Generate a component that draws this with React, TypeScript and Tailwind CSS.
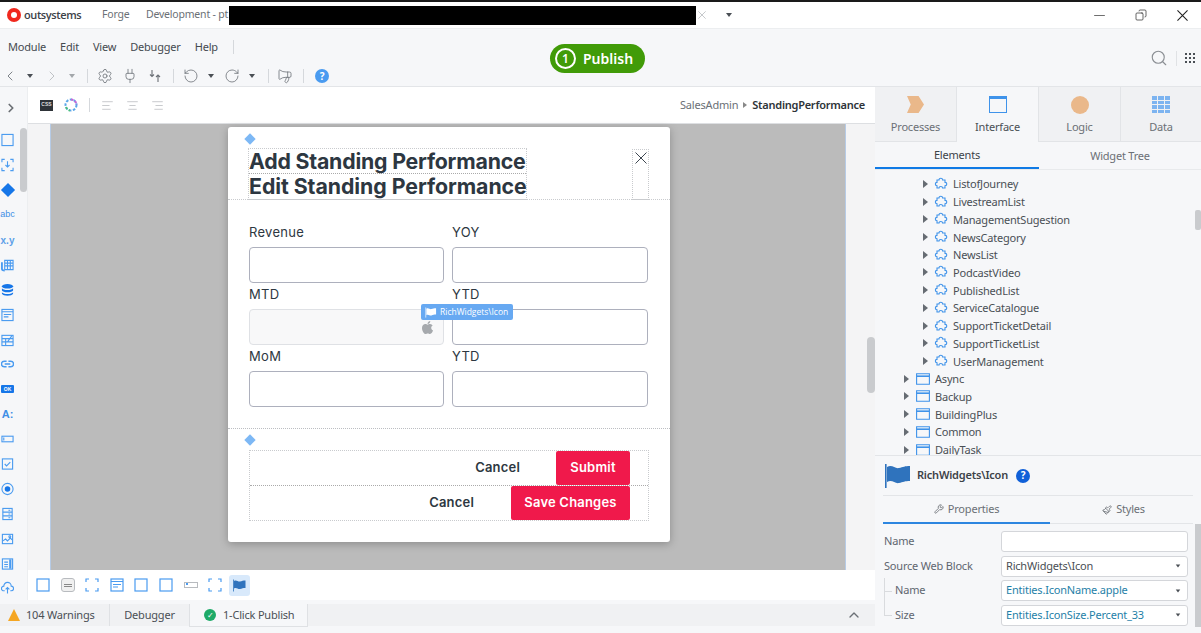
import type { ReactNode } from 'react'
import {
  AlignCenter,
  AlignLeft,
  AlignRight,
  ChevronLeft,
  ChevronRight,
  ChevronUp,
  Copy,
  Megaphone,
  Minus,
  Plug,
  RotateCcw,
  RotateCw,
  Search,
  Settings,
  Wrench,
  Paintbrush,
} from 'lucide-react'
import { FaApple } from 'react-icons/fa'

const BLUE = '#4a9bf0'

function Caret({ className = '' }: { className?: string }) {
  return <span className={`h-0 w-0 border-x-[3.5px] border-t-[4px] border-x-transparent border-t-[#4a4f55] ${className}`} />
}

function TreeArrow() {
  return <span className="h-0 w-0 border-y-[4px] border-l-[5px] border-y-transparent border-l-[#666c73]" />
}

function Cross({ className, width = 1 }: { className: string; width?: number }) {
  return (
    <svg viewBox="0 0 12 12" className={className} fill="none" stroke="currentColor" strokeWidth={width}>
      <path d="M.5.5l11 11M11.500.5l-11 11" />
    </svg>
  )
}

function Outline({ children }: { children: ReactNode }) {
  return (
    <svg viewBox="0 0 14 14" className="h-[14px] w-[14px]" fill="none" stroke={BLUE} strokeWidth="1.2">
      {children}
    </svg>
  )
}

function FlagIcon({ className, color = '#2f73bd' }: { className: string; color?: string }) {
  return (
    <svg viewBox="0 0 28 26" className={className}>
      <rect x="1" y="1" width="1.6" height="24" fill={color} />
      <path d="M3 4c5-3 8 2 12 1s6-2 11-2v15c-5 0-7 1-11 2s-7-4-12-1z" fill={color} />
    </svg>
  )
}

function Puzzle() {
  return (
    <svg viewBox="0 0 14 14" className="h-[14px] w-[14px] shrink-0" fill="none" stroke="#3f93ea" strokeWidth="1.1">
      <path d="M3 3h2c0-2.400 3.600-2.400 3.600 0H11v2.400c2.400 0 2.400 3.400 0 3.400V11H8.600c0-2-3.600-2-3.600 0H3V8.800C.8 8.800.8 5.400 3 5.400z" />
    </svg>
  )
}

function FolderIcon() {
  return (
    <svg viewBox="0 0 14 12" className="h-[12px] w-[14px] shrink-0" fill="none" stroke="#3f93ea" strokeWidth="1.1">
      <path d="M.6.8h12.800v10.400H.6z" />
      <path d="M.6 3.200h12.800" strokeWidth="1.6" />
    </svg>
  )
}

const railIcons: ReactNode[] = [
  <Outline key="container"><rect x="1" y="1" width="12" height="12" /></Outline>,
  <Outline key="placeholder"><path d="M1 4V1h3M10 1h3v3M13 10v3h-3M4 13H1v-3M7 3v6M4.800 7 7 9.200 9.200 7" /></Outline>,
  <span key="if" className="h-[10px] w-[10px] rotate-45 bg-[#1676e8]" />,
  <span key="abc" className="font-['Liberation_Sans',sans-serif] text-[9px] tracking-normal text-[#3f8fe6]">abc</span>,
  <span key="xy" className="font-['Liberation_Sans',sans-serif] text-[10px] font-bold tracking-normal text-[#5d9fe8]">x.y</span>,
  <Outline key="table"><path d="M4 2h9v10H4zM4 5h9M4 8h9M7 2v10M10 2v10" /><path d="M1 4v7c0 1 1 2 3 2" strokeWidth="2" /></Outline>,
  <svg key="db" viewBox="0 0 14 14" className="h-[14px] w-[14px]" fill="#1676e8"><ellipse cx="7" cy="3" rx="6" ry="2.500" /><path d="M1 5c1 2.500 11 2.500 12 0v2.500c-1 2.500-11 2.500-12 0zM1 9.500c1 2.500 11 2.500 12 0V11c-1 2.800-11 2.800-12 0z" /></svg>,
  <Outline key="form"><rect x="1" y="1" width="12" height="12" /><path d="M1 3.500h12M3 6.500h8M3 9h5" /></Outline>,
  <Outline key="edit"><rect x="1" y="2" width="12" height="11" /><path d="M1 5.500h12M1 9h12M5 5.500V13M7 9l5-7" /></Outline>,
  <Outline key="link"><path d="M6 4H3.500a3 3 0 0 0 0 6H6M8 4h2.500a3 3 0 0 1 0 6H8M4 7h6" strokeWidth="1.500" /></Outline>,
  <span key="ok" className="flex h-[8px] w-[13px] items-center justify-center rounded-[1px] bg-[#1676e8] font-['Liberation_Sans',sans-serif] text-[5px] font-bold tracking-normal text-white">OK</span>,
  <span key="label" className="font-['Liberation_Sans',sans-serif] text-[11px] font-bold tracking-normal text-[#3f8fe6]">A:</span>,
  <Outline key="input"><rect x="1" y="4" width="12" height="6" /><path d="M3 5.500v3" /></Outline>,
  <Outline key="check"><rect x="1.500" y="1.500" width="11" height="11" /><path d="m4 7 2 2 4-4" /></Outline>,
  <svg key="radio" viewBox="0 0 14 14" className="h-[14px] w-[14px]" fill="none" stroke={BLUE} strokeWidth="1.200"><circle cx="7" cy="7" r="6" /><circle cx="7" cy="7" r="3" fill="#1676e8" stroke="none" /></svg>,
  <Outline key="list"><rect x="2" y="1" width="10" height="12" /><path d="M2 5h10M2 9h10" /><path d="M8 3h2M8 7h2M8 11h2" /></Outline>,
  <Outline key="image"><rect x="1.500" y="2" width="11" height="10" /><path d="m2 9 3-2 2 2 3-3 2 2" /><circle cx="9.500" cy="4.500" r="1" /></Outline>,
  <Outline key="table2"><rect x="1.500" y="1.500" width="11" height="11" /><path d="M3.500 5h4M3.500 7.500h4M3.500 10h4" /><path d="M10 2v10" strokeWidth="2.400" /></Outline>,
  <svg key="upload" viewBox="0 0 14 14" className="h-[14px] w-[14px]" fill="none" stroke={BLUE} strokeWidth="1.200"><path d="M4 10H3a2.500 2.500 0 0 1 0-5 4 4 0 0 1 8 0 2.500 2.500 0 0 1 0 5h-1M7 13V6.500M5 8.500l2-2 2 2" /></svg>,
]

const treeChildren = [
  'ListofJourney',
  'LivestreamList',
  'ManagementSugestion',
  'NewsCategory',
  'NewsList',
  'PodcastVideo',
  'PublishedList',
  'ServiceCatalogue',
  'SupportTicketDetail',
  'SupportTicketList',
  'UserManagement',
]
const treeFolders = ['Async', 'Backup', 'BuildingPlus', 'Common', 'DailyTask']

function Field({ label, disabled, children }: { label: string; disabled?: boolean; children?: ReactNode }) {
  return (
    <div className="w-[195px] last:w-[196px]">
      <div className="h-[26px] text-[13px] leading-[22px] tracking-[0.3px] text-[#2d3741]">{label}</div>
      <div
        className={`relative h-[36px] rounded-[4px] border ${disabled ? 'border-[#dfe1e5] bg-[#f8f8f9]' : 'border-[#adb0bd] bg-white'}`}
      >
        {children}
      </div>
    </div>
  )
}

function PropRow({ label, value, teal, nested, last, select = true }: { label: string; value?: string; teal?: boolean; nested?: boolean; last?: boolean; select?: boolean }) {
  return (
    <div className="flex h-[24.7px] items-center">
      <div className={`relative flex h-full w-[118px] items-center pl-[1px] ${nested ? 'pl-[12px]' : ''}`}>
        {nested ? (
          <>
            <span className={`absolute left-[1px] top-0 w-px bg-[#d9dbde] ${last ? 'h-1/2' : 'h-full'}`} />
            <span className="absolute left-[1px] top-1/2 h-px w-[8px] bg-[#d9dbde]" />
          </>
        ) : null}
        {label}
      </div>
      <div className="flex h-[21px] w-[187px] items-center justify-between rounded-[3px] border border-[#d4d6da] bg-white pl-[4px] pr-[6px]">
        <span className={teal ? 'text-[#1f7fa8]' : 'text-[#4a4f55]'}>{value}</span>
        {select ? <Caret className="scale-75" /> : null}
      </div>
    </div>
  )
}

export default function App() {
  return (
    <div className="flex h-[633px] w-[1201px] flex-col overflow-hidden bg-[#f6f7f9] font-['Noto_Sans',sans-serif] text-[11px] tracking-[-0.2px] text-[#4a4f55]">
      <div className="h-[2px] shrink-0 bg-[#1a1a1a]" />

      {/* title bar */}
      <div className="flex h-[27px] shrink-0 items-center border-b border-[#eceef0] bg-white pl-[7px] text-[10.5px] text-[#6b7076]">
        <span className="flex h-[14px] w-[14px] items-center justify-center rounded-full bg-[#f0281e]">
          <span className="h-[6px] w-[6px] rounded-full bg-white" />
        </span>
        <span className="ml-[3px] w-[78px] font-['Open_Sans',sans-serif] text-[11px] font-semibold tracking-[-0.4px] text-[#3c4248]">outsystems</span>
        <span className="w-[44px]">Forge</span>
        <span className="w-[83px] whitespace-nowrap">Development - pt</span>
        <div className="h-[19px] w-[467px] bg-black" />
        <Cross className="ml-[2px] h-[8px] w-[8px] text-[#a9adb2]" />
        <Caret className="ml-[20px]" />
        <div className="ml-auto flex items-center">
          <Minus className="h-[17px] w-[17px] text-[#555]" strokeWidth={1.2} />
          <Copy className="ml-[27px] h-[12px] w-[12px] -scale-x-100 text-[#333]" strokeWidth={1.5} />
          <Cross className="ml-[30px] mr-[13px] h-[11px] w-[11px] text-[#222]" width={1.2} />
        </div>
      </div>

      {/* menu + toolbar */}
      <div className="relative h-[58px] shrink-0 border-b border-[#e3e5e8]">
        <div className="flex h-[36px] items-center pl-[8px] text-[#454a50]">
          <span>Module</span>
          <span className="ml-[14px]">Edit</span>
          <span className="ml-[14px]">View</span>
          <span className="ml-[14px]">Debugger</span>
          <span className="ml-[14px]">Help</span>
          <span className="ml-[15px] h-[14px] w-px bg-[#d5d8dc]" />
        </div>
        <div className="flex h-[22px] items-center pl-[2px] text-[#6b7076]">
          <ChevronLeft className="h-[16px] w-[16px]" strokeWidth={1.3} />
          <Caret className="ml-[8.5px]" />
          <ChevronRight className="ml-[11.5px] h-[16px] w-[16px] text-[#b6b9bd]" strokeWidth={1.3} />
          <Caret className="ml-[8.5px] border-t-[#a3a7ab]" />
          <span className="ml-[12.5px] h-[14px] w-px bg-[#d5d8dc]" />
          <Settings className="ml-[9px] h-[16px] w-[16px]" strokeWidth={1.2} />
          <Plug className="ml-[9px] h-[16px] w-[16px]" strokeWidth={1.2} />
          <svg viewBox="0 0 16 16" className="ml-[9px] h-[16px] w-[16px]" fill="none" stroke="currentColor" strokeWidth="1.1">
            <path d="M5 2v6M3 6.500 5 8.500l2-2M11 14V7M9 9l2-2 2 2" />
          </svg>
          <span className="ml-[10px] h-[14px] w-px bg-[#d5d8dc]" />
          <RotateCcw className="ml-[9px] h-[16px] w-[16px]" strokeWidth={1.2} />
          <Caret className="ml-[8.5px]" />
          <RotateCw className="ml-[10.5px] h-[16px] w-[16px]" strokeWidth={1.2} />
          <Caret className="ml-[8.5px]" />
          <span className="ml-[13.5px] h-[14px] w-px bg-[#d5d8dc]" />
          <Megaphone className="ml-[8px] h-[16px] w-[16px] -scale-x-100" strokeWidth={1.2} />
          <span className="ml-[10px] h-[14px] w-px bg-[#d5d8dc]" />
          <span className="ml-[11px] flex h-[14px] w-[14px] items-center justify-center rounded-full bg-[#4a9bf0] text-[10px] font-bold text-white">?</span>
        </div>

        {/* publish */}
        <div className="absolute left-[550px] top-[15px] flex h-[29px] w-[95px] items-center rounded-full bg-[#419b08] pl-[5px] tracking-normal text-white">
          <span className="flex h-[21px] w-[21px] items-center justify-center rounded-full border-2 border-white text-[12px] font-semibold">1</span>
          <span className="ml-[7px] text-[14px] font-semibold">Publish</span>
        </div>

        <div className="absolute right-[6px] top-[20px] flex items-center">
          <Search className="h-[18px] w-[18px] text-[#8a8e93]" strokeWidth={1.5} />
          <span className="ml-[8px] h-[15px] w-px bg-[#e0e2e5]" />
          <div className="ml-[8px] grid grid-cols-3 gap-[1.5px]">
            {Array.from({ length: 9 }).map((_, i) => (
              <span key={i} className="h-[2.5px] w-[2.5px] bg-[#4a4f55]" />
            ))}
          </div>
        </div>
      </div>

      {/* workspace */}
      <div className="flex min-h-0 flex-1">
        <div className="flex w-[875px] shrink-0 flex-col">
          <div className="flex min-h-0 flex-1">
            {/* widget rail */}
            <div className="relative w-[28px] shrink-0 overflow-hidden border-r border-[#eceef0]">
              <div className="flex h-[41px] items-center pl-[4px]">
                <ChevronRight className="h-[14px] w-[14px] text-[#6c7075]" strokeWidth={3} />
              </div>
              <div className="flex flex-col">
                {railIcons.map((icon, i) => (
                  <div key={i} className="flex h-[24.9px] w-[14px] items-center justify-center overflow-visible pl-[1px]">
                    {icon}
                  </div>
                ))}
              </div>
              <div className="absolute left-[20px] top-[41px] h-[64px] w-[7px] rounded-full bg-[#c9cbce]" />
            </div>

            <div className="flex min-w-0 flex-1 flex-col">
              {/* canvas toolbar */}
              <div className="flex h-[37px] shrink-0 items-center border-b border-[#dddfe2] bg-white pl-[12px] pr-[10px]">
                <span className="flex h-[11px] w-[13px] items-center justify-center bg-[#2e3338] font-['Liberation_Sans',sans-serif] text-[5px] font-bold tracking-normal text-[#ddd]">CSS</span>
                <svg viewBox="0 0 14 14" className="ml-[11px] h-[14px] w-[14px]" fill="none" strokeWidth="2" strokeDasharray="2.500 1.500">
                  <circle cx="7" cy="7" r="5.500" stroke="#5aa7e8" />
                  <path d="M7 1.500a5.500 5.500 0 0 1 5.500 5.500" stroke="#c468d8" />
                  <path d="M2 9a5.500 5.500 0 0 0 4 3.500" stroke="#4cc07a" />
                </svg>
                <span className="ml-[11px] h-[14px] w-px bg-[#d5d8dc]" />
                <AlignLeft className="ml-[11px] h-[13px] w-[13px] text-[#9a9ea3]" strokeWidth={1} />
                <AlignCenter className="ml-[12px] h-[13px] w-[13px] text-[#9a9ea3]" strokeWidth={1} />
                <AlignRight className="ml-[12px] h-[13px] w-[13px] text-[#9a9ea3]" strokeWidth={1} />
                <div className="ml-auto flex items-center">
                  <span className="text-[#6b7076]">SalesAdmin</span>
                  <span className="mx-[5px] h-0 w-0 border-y-[3.5px] border-l-[4px] border-y-transparent border-l-[#888]" />
                  <span className="font-semibold tracking-[-0.25px] text-[#2e3338]">StandingPerformance</span>
                </div>
              </div>

              {/* canvas */}
              <div className="relative flex min-h-0 flex-1 bg-[#f4f4f5]">
                <div className="ml-[22px] h-full w-[796px] border-x border-[#b6cbe6] bg-[#bbbbbb] pl-[177px] pt-[3px]">
                  <div className="relative h-[415px] w-[442px] rounded-[3px] bg-white pl-[21px] font-['Inter',sans-serif] tracking-normal shadow-[0_2px_8px_rgba(0,0,0,0.25)]">
                    <span className="absolute left-[18px] top-[8px] h-[8px] w-[8px] rotate-45 bg-[#7db8f5]" />

                    {/* modal title */}
                    <div className="-ml-[21px] flex h-[73px] items-start border-b border-dotted border-[#c9cbce] pl-[21px] pt-[22px]">
                      <div className="w-[277px] text-[21.3px] font-bold leading-[25px] text-[#2d3741] outline-1 outline-dotted outline-[#c9cbce]">
                        <div className="h-[25px] whitespace-nowrap border-b border-dotted border-[#aaa] tracking-[-0.2px]">Add Standing Performance</div>
                        <div className="h-[25px] whitespace-nowrap tracking-[-0.05px]">Edit Standing Performance</div>
                      </div>
                      <div className="ml-[106px] flex h-[51px] w-[17px] justify-center border border-dotted border-[#c9cbce] pt-[2px]">
                        <Cross className="h-[12px] w-[12px] text-[#3d4650]" />
                      </div>
                    </div>

                    {/* modal form */}
                    <div className="-ml-[21px] flex h-[229px] flex-col border-b border-dotted border-[#bcbec2] pl-[21px] pt-[21px]">
                      <div className="flex gap-[8px]">
                        <Field label="Revenue" />
                        <Field label="YOY" />
                      </div>
                      <div className="flex gap-[8px]">
                        <Field label="MTD" disabled>
                          <FaApple className="absolute left-[170px] top-[10px] h-[15px] w-[15px] text-[#a6a9ad]" />
                          <div className="absolute left-[171px] top-[-6px] z-10 flex h-[16px] w-[92px] items-center rounded-[2px] bg-[#67a9f2] pl-[4px]">
                            <FlagIcon className="h-[11px] w-[12px]" color="#ffffff" />
                            <span className="ml-[3px] font-['Open_Sans',sans-serif] text-[8.5px] text-white">RichWidgets\Icon</span>
                          </div>
                        </Field>
                        <Field label="YTD" />
                      </div>
                      <div className="flex gap-[8px]">
                        <Field label="MoM" />
                        <Field label="YTD" />
                      </div>
                    </div>

                    <span className="absolute left-[18px] top-[309px] h-[8px] w-[8px] rotate-45 bg-[#7db8f5]" />

                    {/* modal actions */}
                    <div className="mt-[21px] w-[400px] border border-dotted border-[#c9cbce] text-[13px] font-semibold tracking-[0.2px]">
                      <div className="flex h-[35px] items-center justify-end border-b border-dotted border-[#aaa] pr-[18px]">
                        <span className="mr-[36px] text-[#2d3741]">Cancel</span>
                        <span className="flex h-[34px] w-[74px] items-center justify-center rounded-[2px] bg-[#f0194b] text-white">Submit</span>
                      </div>
                      <div className="flex h-[34px] items-center justify-end pr-[18px]">
                        <span className="mr-[37px] text-[#2d3741]">Cancel</span>
                        <span className="flex h-[34px] w-[119px] items-center justify-center rounded-[2px] bg-[#f0194b] text-white">Save Changes</span>
                      </div>
                    </div>
                  </div>
                </div>
                <div className="absolute right-0 top-[213px] h-[56px] w-[8px] rounded-full bg-[#c9cbce]" />
              </div>

              {/* breadcrumb widgets */}
              <div className="flex h-[30px] shrink-0 items-center gap-[10.6px] bg-white pl-[8px]">
                <Outline><rect x="1" y="1" width="12" height="12" /></Outline>
                <span className="flex h-[14px] w-[14px] items-center justify-center rounded-[3px] border border-[#b8bbbf] bg-[#f0f0f0]"><span className="h-[3px] w-[8px] border-y border-[#888]" /></span>
                <Outline><path d="M1 4V1h3M10 1h3v3M13 10v3h-3M4 13H1v-3" /></Outline>
                <Outline><rect x="1" y="1" width="12" height="12" /><path d="M1 3.500h12M3 6.500h8M3 9h5" /></Outline>
                <Outline><rect x="1" y="1" width="12" height="12" /></Outline>
                <Outline><rect x="1" y="1" width="12" height="12" /></Outline>
                <span className="h-[6px] w-[14px] border border-[#b8bbbf]"><span className="ml-[1px] block h-[2px] w-[2px] bg-[#4a9bf0]" /></span>
                <Outline><path d="M1 4V1h3M10 1h3v3M13 10v3h-3M4 13H1v-3" /></Outline>
                <span className="-ml-[3.6px] flex h-[21px] w-[21px] items-center justify-center rounded-[3px] bg-[#d8e9fb]">
                  <FlagIcon className="h-[13px] w-[15px]" />
                </span>
              </div>
            </div>
          </div>

          {/* status tabs */}
          <div className="flex h-[33px] shrink-0 items-start bg-[#f6f7f9] pt-[4px]">
            <div className="flex h-[22px] w-[110px] items-center border-r border-[#dfe1e4] bg-[#f0f1f3] pl-[8px]">
              <span className="h-0 w-0 border-x-[6.5px] border-b-[12px] border-x-transparent border-b-[#f5a623]" />
              <span className="ml-[6px]">104 Warnings</span>
            </div>
            <div className="flex h-[22px] w-[79px] items-center justify-center bg-[#f0f1f3]">Debugger</div>
            <div className="flex h-[23px] w-[119px] items-center border-x border-b border-[#dfe1e4] bg-[#f6f7f9] pl-[14px]">
              <span className="flex h-[12px] w-[12px] items-center justify-center rounded-full bg-[#1eaa68] text-[8px] leading-none text-white">✓</span>
              <span className="ml-[7px]">1-Click Publish</span>
            </div>
            <div className="flex h-[22px] flex-1 items-center justify-end bg-[#f0f1f3] pr-[13px]">
              <ChevronUp className="h-[16px] w-[16px] text-[#6b7076]" strokeWidth={2} />
            </div>
          </div>
        </div>

        {/* right panel */}
        <div className="relative flex w-[326px] shrink-0 flex-col">
          <div className="flex h-[55px] shrink-0">
            <div className="flex w-[82px] flex-col items-center border-b border-r border-[#e2e4e7] bg-[#f0f1f3] pt-[9px]">
              <span className="h-[17px] w-[17px] bg-[#eab88a] [clip-path:polygon(0_0,68%_0,100%_50%,68%_100%,0_100%,22%_50%)]" />
              <span className="mt-[6px] text-[#6b7076]">Processes</span>
            </div>
            <div className="flex w-[82px] flex-col items-center border-r border-[#e2e4e7] pt-[9px]">
              <span className="h-[17px] w-[18px] border border-t-[3px] border-[#3f93ea]" />
              <span className="mt-[6px] text-[#4a4f55]">Interface</span>
            </div>
            <div className="flex w-[82px] flex-col items-center border-b border-r border-[#e2e4e7] bg-[#f0f1f3] pt-[9px]">
              <span className="h-[18px] w-[18px] rounded-full bg-[#eab88a]" />
              <span className="mt-[5px] text-[#6b7076]">Logic</span>
            </div>
            <div className="flex flex-1 flex-col items-center border-b border-[#e2e4e7] bg-[#f0f1f3] pt-[9px]">
              <div className="grid h-[17px] w-[18px] grid-cols-3 gap-[1px]">
                {Array.from({ length: 12 }).map((_, i) => (
                  <span key={i} className="bg-[#7db4f0]" />
                ))}
              </div>
              <span className="mt-[6px] text-[#6b7076]">Data</span>
            </div>
          </div>

          <div className="flex h-[28px] shrink-0 items-center border-b border-[#e8eaec]">
            <div className="flex h-full w-[164px] items-center justify-center border-b-2 border-[#0f7ae5] pt-[2px] text-[#3c4248]">Elements</div>
            <div className="flex h-full flex-1 items-center justify-center pt-[2px] text-[#6b7076]">Widget Tree</div>
          </div>

          <div className="relative h-[285px] shrink-0 overflow-hidden pt-[5px] text-[#4a4f55]">
            {treeChildren.map((name) => (
              <div key={name} className="flex h-[17.73px] items-center pl-[48px]">
                <TreeArrow />
                <span className="ml-[6px]"><Puzzle /></span>
                <span className="ml-[5px] leading-none">{name}</span>
              </div>
            ))}
            {treeFolders.map((name) => (
              <div key={name} className="flex h-[17.73px] items-center pl-[29px]">
                <TreeArrow />
                <span className="ml-[7px]"><FolderIcon /></span>
                <span className="ml-[5px] leading-none">{name}</span>
              </div>
            ))}
            <div className="absolute right-0 top-[40px] h-[20px] w-[6px] rounded-[2px] bg-[#c9cbce]" />
          </div>

          {/* properties */}
          <div className="flex-1 border-t border-[#e3e5e8] px-[8px]">
            <div className="flex h-[40px] items-center border-b border-[#e3e5e8] pl-[1px]">
              <FlagIcon className="h-[26px] w-[28px]" />
              <span className="ml-[5px] font-semibold text-[#3c4248]">RichWidgets\Icon</span>
              <span className="ml-[8px] flex h-[14px] w-[14px] items-center justify-center rounded-full bg-[#1060d8] text-[10px] font-bold text-white">?</span>
            </div>
            <div className="flex h-[28px] items-center text-[#6b7076]">
              <div className="flex h-full w-[167px] items-center justify-center border-b-2 border-[#2d86e0]">
                <Wrench className="mr-[4px] h-[10px] w-[10px]" strokeWidth={2} />
                Properties
              </div>
              <div className="flex h-full flex-1 items-center justify-center border-b border-[#e3e5e8] pl-[4px]">
                <Paintbrush className="mr-[4px] h-[10px] w-[10px]" strokeWidth={2} />
                Styles
              </div>
            </div>
            <div className="pt-[5px] text-[#5f6670]">
              <PropRow label="Name" select={false} />
              <PropRow label="Source Web Block" value="RichWidgets\Icon" />
              <PropRow label="Name" value="Entities.IconName.apple" teal nested />
              <PropRow label="Size" value="Entities.IconSize.Percent_33" teal nested last />
            </div>
          </div>
          <div className="absolute bottom-[6px] right-0 h-[103px] w-[6px] bg-[#c9cbce]" />
        </div>
      </div>
    </div>
  )
}
